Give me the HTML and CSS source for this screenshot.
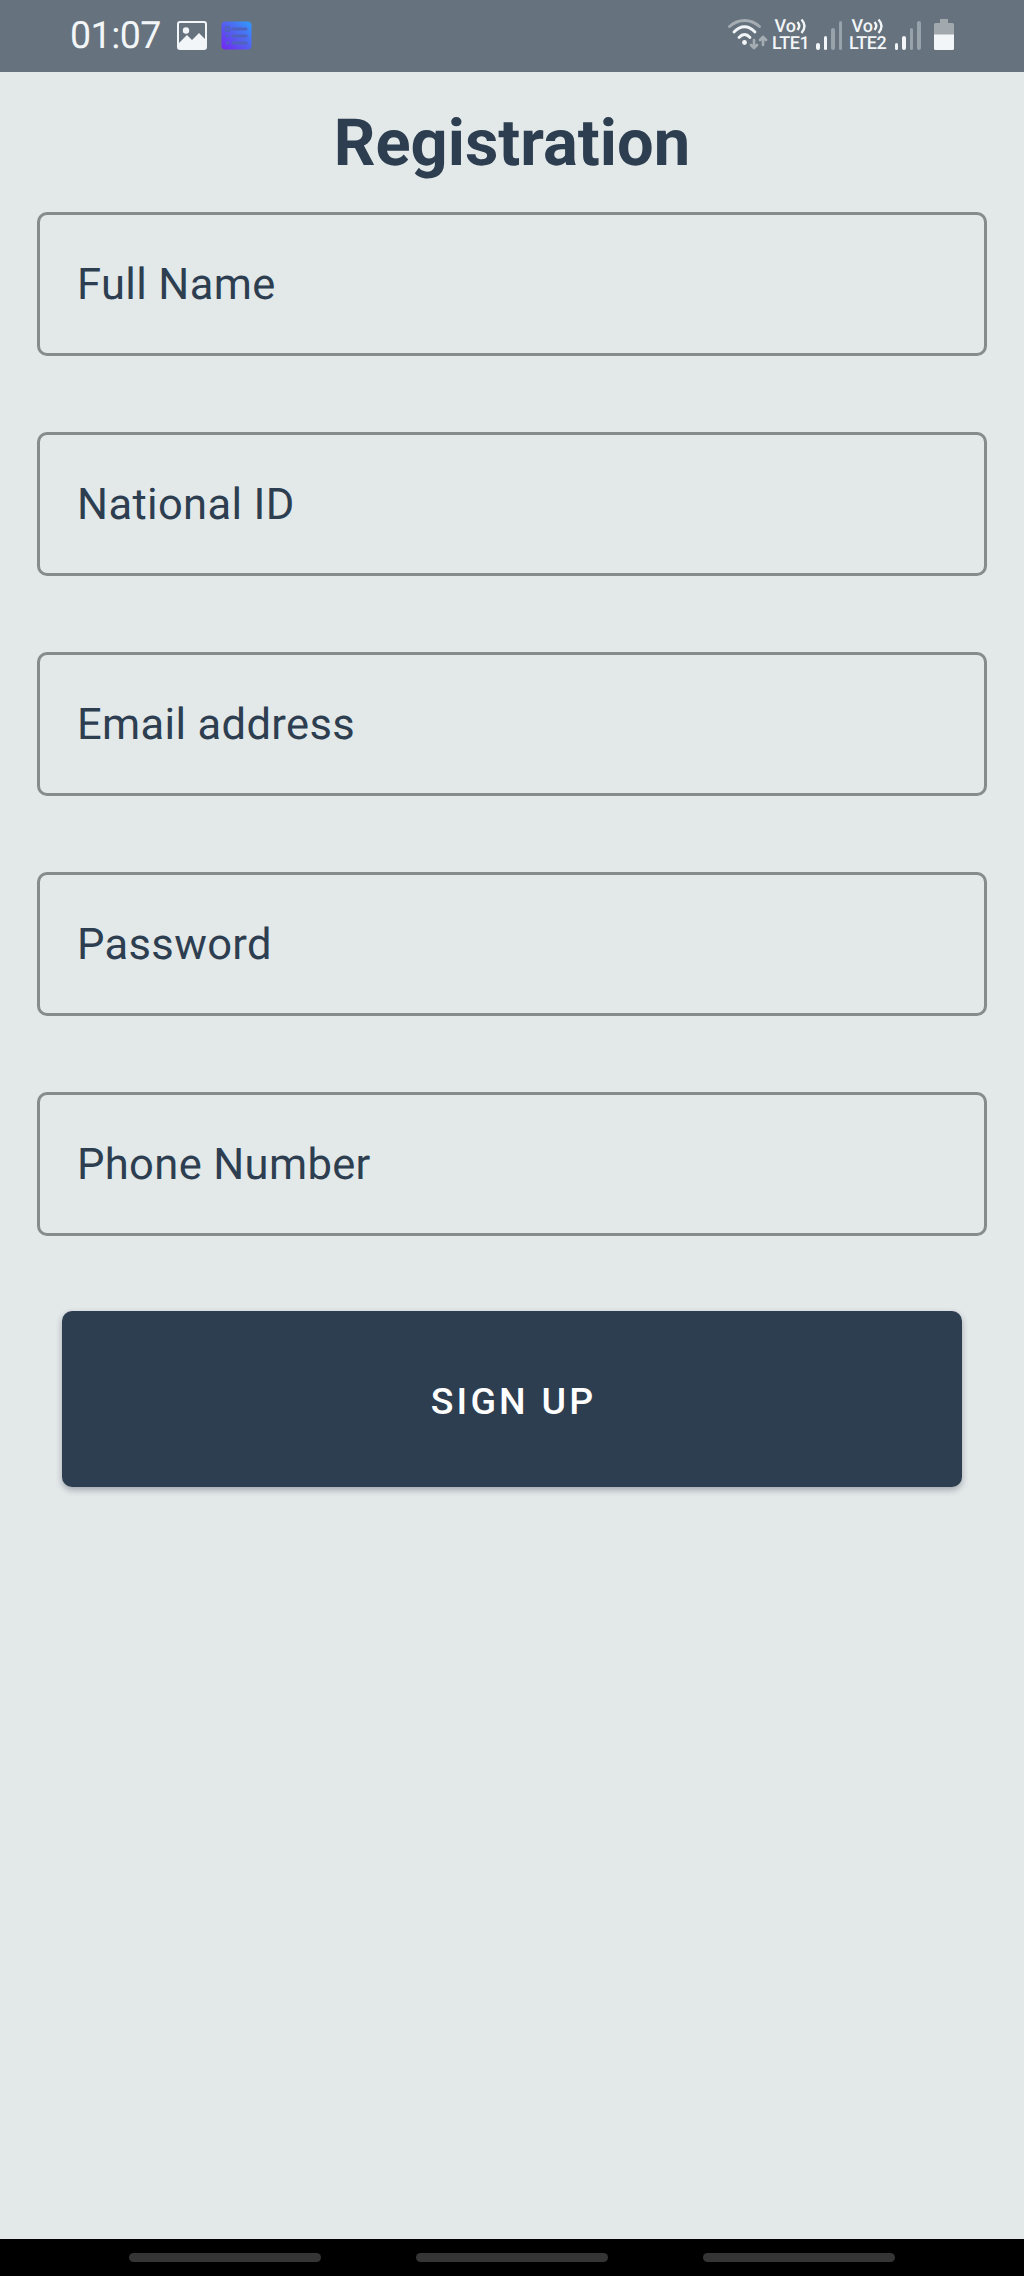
FILE: index.html
```html
<!DOCTYPE html>
<html lang="en">
<head>
  <meta charset="UTF-8">
  <meta name="viewport" content="width=device-width, initial-scale=1.0">
  <title>Registration</title>
  <link rel="stylesheet" href="styles.css">
</head>
<body>
  <header class="status-bar">
    <span class="clock">01:07</span>
    <svg class="icon-picture" width="30" height="29" viewBox="0 0 30 29">
      <rect x="1" y="1" width="28" height="27" rx="2" fill="none" stroke="#f3f6f8" stroke-width="2"/>
      <circle cx="9" cy="9.500" r="3.200" fill="#f3f6f8"/>
      <path d="M2 22L10 14L15 19L22 12L28 18V27H2Z" fill="#f3f6f8"/>
    </svg>
    <svg class="icon-app" width="31" height="29" viewBox="0 0 31 29">
      <defs>
        <linearGradient id="appFill" x1="0" y1="1" x2="1" y2="0">
          <stop offset="0" stop-color="#7424f3"/>
          <stop offset="0.500" stop-color="#5460ef"/>
          <stop offset="1" stop-color="#2e9cff"/>
        </linearGradient>
      </defs>
      <rect x="0.500" y="0.500" width="30" height="28" rx="4" fill="url(#appFill)"/>
      <g fill="none" stroke="#4f62bd" stroke-width="3" stroke-linecap="round">
        <path d="M12 8H25M12 15H25M12 22H25"/>
        <circle cx="6.500" cy="8" r="2.200" stroke-width="2"/>
        <path d="M6.500 15H6.600M6.500 22H6.600"/>
      </g>
    </svg>
    <div class="status-right">
      <svg class="icon-wifi" width="40" height="31" viewBox="0 0 40 31">
        <g fill="none" stroke="#f3f6f8" stroke-width="2.800" stroke-linecap="round">
          <path d="M1.500 7.500C10.500 -0.500 22.500 -0.500 31.500 7.500" stroke="#a5adb3"/>
          <path d="M6 13C12.500 6 20.500 6 27 13"/>
          <path d="M11 18.500C14.500 14.500 18.500 14.500 22 18.500"/>
        </g>
        <circle cx="16.500" cy="23.500" r="2.400" fill="#f3f6f8"/>
        <path d="M26 21V29M23 26L26 29.200L29 26M35 26V18M32 21L35 17.800L38 21" fill="none" stroke="#a5adb3" stroke-width="2.600" stroke-linecap="round" stroke-linejoin="round"/>
      </svg>
      <div class="volte">
        <span class="vo">Vo<svg width="11" height="17" viewBox="0 0 11 17"><path d="M1.500 5Q5 9 1.500 13M5.500 2.500Q11.500 9 5.500 16" fill="none" stroke="#f3f6f8" stroke-width="2.400"/></svg></span>
        <span class="lte">LTE1</span>
      </div>
      <div class="signal">
        <i class="bar on b1"></i><i class="bar on b2"></i><i class="bar b3"></i><i class="bar b4"></i>
      </div>
      <div class="volte second">
        <span class="vo">Vo<svg width="11" height="17" viewBox="0 0 11 17"><path d="M1.500 5Q5 9 1.500 13M5.500 2.500Q11.500 9 5.500 16" fill="none" stroke="#f3f6f8" stroke-width="2.400"/></svg></span>
        <span class="lte">LTE2</span>
      </div>
      <div class="signal">
        <i class="bar on b1"></i><i class="bar on b2"></i><i class="bar b3"></i><i class="bar b4"></i>
      </div>
      <svg class="icon-battery" width="20" height="31" viewBox="0 0 20 31">
        <path d="M6 0H14V4H18.500Q20 4 20 5.500V16H0V5.500Q0 4 1.500 4H6Z" fill="#a1a9af"/>
        <path d="M0 15.500H20V29.500Q20 31 18.500 31H1.500Q0 31 0 29.500Z" fill="#f3f6f8"/>
      </svg>
    </div>
  </header>

  <main class="screen">
    <h1>Registration</h1>
    <form class="form">
      <label class="field">Full Name</label>
      <label class="field">National ID</label>
      <label class="field">Email address</label>
      <label class="field">Password</label>
      <label class="field">Phone Number</label>
      <button class="button" type="button">SIGN UP</button>
    </form>
  </main>

  <nav class="nav-bar">
    <span class="nav-handle"></span>
    <span class="nav-handle"></span>
    <span class="nav-handle"></span>
  </nav>
</body>
</html>
```
FILE: styles.css
```css
:root {
  --bg: #e3e8e9;
  --navy: #2d3e50;
  --status: #66737e;
  --icon: #f3f6f8;
  --icon-dim: #98a2aa;
}
* {
  box-sizing: border-box;
}
body {
  margin: 0;
  height: 2276px;
  display: flex;
  flex-direction: column;
  background: var(--bg);
  color: var(--navy);
  font-family: Roboto, "Liberation Sans", sans-serif;
  text-rendering: geometricPrecision;
}

/* STATUS BAR */
.status-bar {
  display: flex;
  align-items: flex-start;
  height: 72px;
  padding: 0 70px;
  background: var(--status);
  color: var(--icon);
}
.clock {
  width: 92px;
  font-size: 37.5px;
  line-height: 44px;
  margin-top: 14px;
  letter-spacing: -0.5px;
  white-space: nowrap;
}
.icon-picture {
  margin: 21px 0 0 15px;
}
.icon-app {
  margin: 21px 0 0 14px;
}
.status-right {
  display: flex;
  margin-left: auto;
}
.icon-wifi {
  margin-top: 19px;
}
.volte {
  width: 38px;
  margin: 17px 0 0 4px;
  display: flex;
  flex-direction: column;
  font-size: 18px;
  font-weight: 500;
}
.volte.second {
  width: 39.6px;
  margin-left: 6.6px;
}
.vo {
  display: flex;
  height: 18px;
  line-height: 19px;
  padding-left: 2.5px;
}
.lte {
  line-height: 17px;
  letter-spacing: -0.4px;
  white-space: nowrap;
}
.signal {
  display: flex;
  align-items: flex-end;
  gap: 4px;
  height: 50px;
  margin-left: 6px;
}
.bar {
  width: 3.6px;
  border-radius: 2px;
  background: var(--icon-dim);
}
.bar.on {
  background: var(--icon);
}
.b1 { height: 7px; }
.b2 { height: 14px; }
.b3 { height: 22px; }
.b4 { height: 29px; }
.icon-battery {
  margin: 19px 0 0 13px;
}

/* FORM */
.screen {
  flex: 1;
  padding: 0 37px;
}
h1 {
  margin: 33px 0 30px;
  font-size: 65px;
  line-height: 77px;
  font-weight: 700;
  text-align: center;
}
.form {
  display: flex;
  flex-direction: column;
  gap: 76px;
}
.field {
  display: flex;
  align-items: center;
  height: 144px;
  padding: 0 37px;
  border: 3px solid #868b8c;
  border-radius: 10px;
  font-size: 43.5px;
  letter-spacing: 0.35px;
}
.button {
  height: 176px;
  margin: -1px 25px 0;
  padding: 4px 0 0 3px;
  border: none;
  border-radius: 10px;
  background: var(--navy);
  color: #fff;
  font-family: inherit;
  font-size: 37.5px;
  font-weight: 500;
  letter-spacing: 3.2px;
  box-shadow: 0 3px 6px rgba(40, 45, 65, 0.35);
}

/* NAVIGATION BAR */
.nav-bar {
  display: flex;
  justify-content: center;
  gap: 95px;
  height: 37px;
  padding-top: 14px;
  background: #000;
}
.nav-handle {
  width: 192px;
  height: 9px;
  border-radius: 5px;
  background: #353535;
}
```
